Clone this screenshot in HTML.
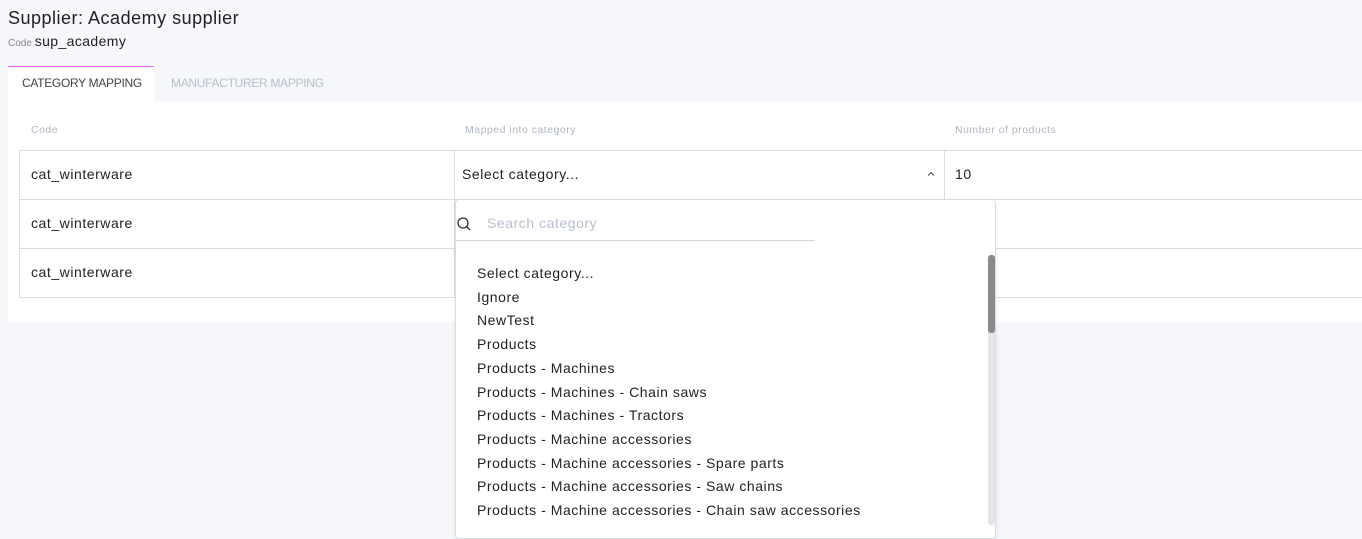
<!DOCTYPE html>
<html><head><style>
*{box-sizing:border-box;margin:0;padding:0}
body{width:1362px;height:532px;overflow:hidden;background:#f6f7fb;font-family:"Liberation Sans",sans-serif;color:#222;position:relative}
.a{position:absolute;white-space:nowrap}
.t{font-size:14px;letter-spacing:0.55px}
.h{font-size:10.5px;letter-spacing:0.5px;color:#b0b6c0}
</style></head><body>
<div class="a" style="left:8px;top:8px;font-size:18px;letter-spacing:0.5px;color:#222">Supplier: Academy supplier</div>
<div class="a" style="left:8px;top:33px;font-size:10px;color:#888">Code <span style="font-size:14px;letter-spacing:0.4px;color:#222">sup_academy</span></div>
<div class="a" style="left:8px;top:66px;width:146px;height:36px;background:#fff;border-top:1px solid #f060f0"></div>
<div class="a" style="left:22px;top:76px;font-size:12px;letter-spacing:-0.3px;color:#444">CATEGORY MAPPING</div>
<div class="a" style="left:171px;top:76px;font-size:12px;letter-spacing:-0.3px;color:#b8bec8">MANUFACTURER MAPPING</div>
<div class="a" style="left:8px;top:101px;width:1354px;height:221px;background:#fff"></div>
<div class="a h" style="left:31px;top:124px">Code</div>
<div class="a h" style="left:465px;top:124px">Mapped into category</div>
<div class="a h" style="left:955px;top:124px">Number of products</div>
<div class="a" style="left:19px;top:150px;width:1350px;height:148px;border:1px solid #d8dde3"></div>
<div class="a" style="left:19px;top:199px;width:1350px;border-top:1px solid #d8dde3"></div>
<div class="a" style="left:19px;top:248px;width:1350px;border-top:1px solid #d8dde3"></div>
<div class="a" style="left:454px;top:150px;height:148px;border-left:1px solid #d8dde3"></div>
<div class="a" style="left:944px;top:150px;height:148px;border-left:1px solid #d8dde3"></div>
<div class="a t" style="left:31px;top:166px">cat_winterware</div>
<div class="a t" style="left:31px;top:215px">cat_winterware</div>
<div class="a t" style="left:31px;top:264px">cat_winterware</div>
<div class="a t" style="left:462px;top:166px">Select category...</div>
<svg class="a" style="left:927px;top:171px" width="8" height="6" viewBox="0 0 8 6"><path d="M1 4.5L4 1.5L7 4.5" fill="none" stroke="#444" stroke-width="1"/></svg>
<div class="a t" style="left:955px;top:166px">10</div>
<div class="a" style="left:455px;top:199px;width:541px;height:340px;background:#fff;border:1px solid #d8dde3;border-radius:4px;box-shadow:0 2px 6px rgba(0,0,0,.08)"></div>
<svg class="a" style="left:456px;top:216px" width="16" height="16" viewBox="0 0 16 16"><circle cx="7" cy="7" r="5" fill="none" stroke="#333" stroke-width="1.3"/><line x1="10.5" y1="10.5" x2="14" y2="14" stroke="#333" stroke-width="1.3"/></svg>
<div class="a t" style="left:487px;top:215px;color:#b8c0cc">Search category</div>
<div class="a" style="left:456px;top:240px;width:359px;border-top:1px solid #cfd6de"></div>
<div class="a" style="left:988px;top:255px;width:7px;height:270px;background:#e6e6e6;border-radius:3px"></div>
<div class="a" style="left:988px;top:255px;width:7px;height:78px;background:#8a8a8a;border-radius:3px"></div>
<div class="a t" style="left:477px;top:262px;line-height:23.7px">Select category...<br>Ignore<br>NewTest<br>Products<br>Products - Machines<br>Products - Machines - Chain saws<br>Products - Machines - Tractors<br>Products - Machine accessories<br>Products - Machine accessories - Spare parts<br>Products - Machine accessories - Saw chains<br>Products - Machine accessories - Chain saw accessories</div>
</body></html>
